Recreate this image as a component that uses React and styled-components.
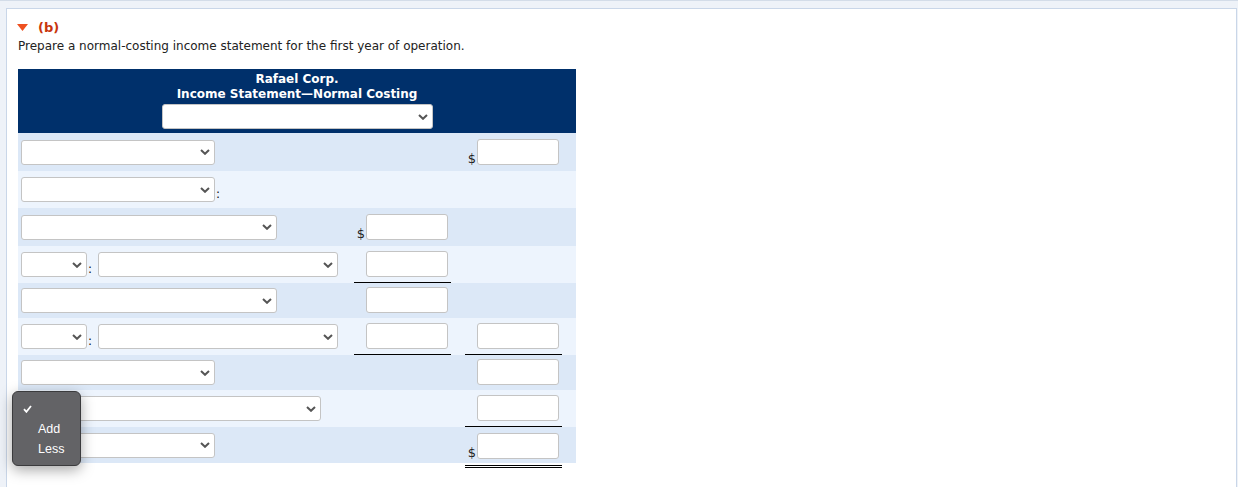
import React from "react";
import styled, { createGlobalStyle } from "styled-components";

const GlobalStyle = createGlobalStyle`
  html, body { margin: 0; padding: 0; background: #fff; }
  body { font-family: "DejaVu Sans", Verdana, sans-serif; color: #222; }
  * { box-sizing: border-box; }
`;

const Outer = styled.div`
  background: #eef2f8;
  border-top: 1px solid #d3dce8;
  padding: 7px 1px 0 6px;
  height: 487px;
  overflow: hidden;
`;

const Card = styled.div`
  position: relative;
  background: #fff;
  border: 1px solid #c9d6e8;
  border-bottom: none;
  height: 100%;
  padding: 11px 10px 0 11px;
`;

const Heading = styled.div`
  display: flex;
  align-items: center;
  gap: 10px;
  margin-left: -1px;
  height: 15px;
  font-size: 13px;
  font-weight: bold;
  color: #c8350d;
`;

const Description = styled.p`
  margin: 4px 0 0;
  font-size: 12px;
  line-height: 15px;
  color: #222;
`;

const Table = styled.div`
  width: 558px;
  margin-top: 15px;
`;

const Header = styled.div`
  background: #00306b;
  color: #fff;
  padding: 3px 0 4px;
  display: flex;
  flex-direction: column;
  align-items: center;
  font-size: 12px;
  font-weight: bold;
  line-height: 15px;
`;

const HeaderSelectWrap = styled.div`
  margin-top: 2px;
`;

const Row = styled.div`
  display: grid;
  grid-template-columns: 336px 97px 14px 97px 14px;
  height: ${(p) => p.$h}px;
  background: ${(p) => (p.$tone === "dark" ? "#dce8f7" : "#edf4fd")};
`;

const LabelCell = styled.div`
  display: flex;
  align-items: center;
  padding-left: 3px;
`;

const Colon = styled.span`
  width: 11px;
  padding-left: 1px;
  font-size: 12px;
  line-height: 12px;
  margin-top: 9px;
  color: #111;
`;

const SelectBox = styled.div`
  width: ${(p) => p.$w}px;
  height: 25px;
  background: #fff;
  border: 1px solid #c4c4c4;
  border-radius: 3px;
  display: flex;
  align-items: center;
  justify-content: flex-end;
  padding-right: 4px;
`;

const AmountCell = styled.div`
  grid-column: ${(p) => p.$col};
  display: flex;
  align-items: center;
  justify-content: flex-end;
  padding-right: 3px;
  padding-bottom: 1px;
  border-bottom: ${(p) =>
    p.$line === "double"
      ? "3px double #000"
      : p.$line === "single"
      ? "1px solid #000"
      : "none"};
  margin-bottom: ${(p) => (p.$line === "double" ? "-5px" : "0")};
`;

const Field = styled.div`
  display: flex;
  align-items: flex-end;
`;

const Dollar = styled.span`
  font-size: 13px;
  line-height: 13px;
  margin-right: 1px;
  color: #222;
`;

const Input = styled.div`
  width: 82px;
  height: 26px;
  background: #fff;
  border: 1px solid #c4c4c4;
  border-radius: 3px;
`;

const Popup = styled.div`
  position: absolute;
  left: 5px;
  top: 382px;
  width: 69px;
  height: 75px;
  background: #636366;
  border: 1px solid #3b3b3d;
  border-radius: 6px;
  box-shadow: 0 4px 14px rgba(0, 0, 0, 0.35);
  padding: 7px 0;
  font-family: "Liberation Sans", Arial, sans-serif;
  font-size: 12.5px;
  color: #fff;
`;

const Option = styled.div`
  height: 20px;
  display: flex;
  align-items: center;
  padding-left: ${(p) => (p.$check ? 10 : 25)}px;
`;

const Chevron = () => (
  <svg width="10" height="6" viewBox="0 0 10 6">
    <path d="M1 1 L5 4.8 L9 1" fill="none" stroke="#555" strokeWidth="2" />
  </svg>
);

const Select = ({ w }) => (
  <SelectBox $w={w}>
    <Chevron />
  </SelectBox>
);

const Amount = ({ col, dollar, line }) => (
  <AmountCell $col={col} $line={line}>
    <Field>
      {dollar && <Dollar>$</Dollar>}
      <Input />
    </Field>
  </AmountCell>
);

const rows = [
  { h: 38, tone: "dark", label: [194], c3: { dollar: true } },
  { h: 37, tone: "light", label: [194, ":"] },
  { h: 38, tone: "dark", label: [256], c2: { dollar: true } },
  { h: 37, tone: "light", label: [66, ":", 240], c2: { line: "single" } },
  { h: 35, tone: "dark", label: [256], c2: {} },
  { h: 37, tone: "light", label: [66, ":", 240], c2: { line: "single" }, c3: { line: "single" } },
  { h: 35, tone: "dark", label: [194], c3: {} },
  { h: 37, tone: "light", label: [300], c3: { line: "single" } },
  { h: 36, tone: "dark", label: [194], c3: { dollar: true, line: "double" } },
];

export default function App() {
  return (
    <>
      <GlobalStyle />
      <Outer>
        <Card>
          <Heading>
            <svg width="11" height="7" viewBox="0 0 11 7">
              <polygon points="0,0 11,0 5.5,7" fill="#ee5020" />
            </svg>
            <span>(b)</span>
          </Heading>
          <Description>
            Prepare a normal-costing income statement for the first year of operation.
          </Description>
          <Table>
            <Header>
              <div>Rafael Corp.</div>
              <div>Income Statement—Normal Costing</div>
              <HeaderSelectWrap>
                <Select w={271} />
              </HeaderSelectWrap>
            </Header>
            {rows.map((r, i) => (
              <Row key={i} $h={r.h} $tone={r.tone}>
                <LabelCell>
                  {r.label.map((item, j) =>
                    item === ":" ? <Colon key={j}>:</Colon> : <Select key={j} w={item} />
                  )}
                </LabelCell>
                {r.c2 && <Amount col={2} dollar={r.c2.dollar} line={r.c2.line} />}
                {r.c3 && <Amount col={4} dollar={r.c3.dollar} line={r.c3.line} />}
              </Row>
            ))}
          </Table>
          <Popup>
            <Option $check>
              <svg width="9" height="8" viewBox="0 0 9 8">
                <path d="M1 4.2 L3.4 6.8 L8 1" fill="none" stroke="#fff" strokeWidth="1.8" />
              </svg>
            </Option>
            <Option>Add</Option>
            <Option>Less</Option>
          </Popup>
        </Card>
      </Outer>
    </>
  );
}
